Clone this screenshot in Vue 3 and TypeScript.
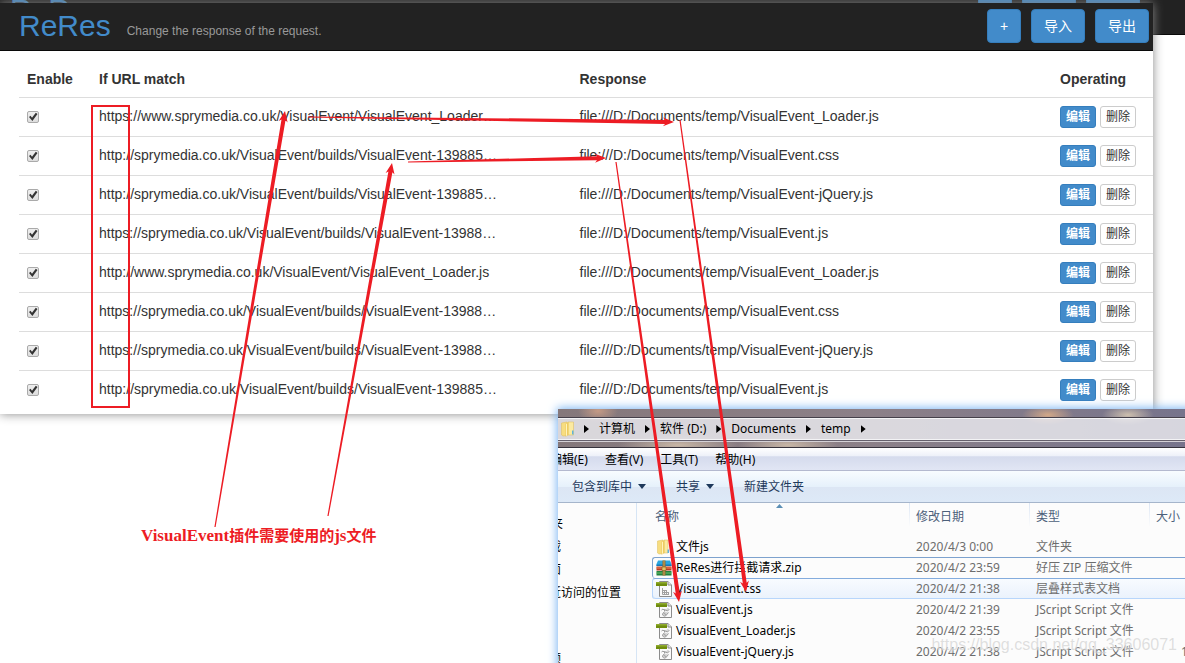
<script setup lang="ts">
interface Rule {
  url: string
  response: string
  enabled: boolean
}

interface FileRow {
  icon: 'folder' | 'zip' | 'css' | 'js'
  name: string
  date: string
  type: string
  size: string
  state: '' | 'focused' | 'hovered'
}

const base = 'file:///D:/Documents/temp/'

const rules: Rule[] = [
  { url: 'https://www.sprymedia.co.uk/VisualEvent/VisualEvent_Loader…', response: base + 'VisualEvent_Loader.js', enabled: true },
  { url: 'http://sprymedia.co.uk/VisualEvent/builds/VisualEvent-139885…', response: base + 'VisualEvent.css', enabled: true },
  { url: 'http://sprymedia.co.uk/VisualEvent/builds/VisualEvent-139885…', response: base + 'VisualEvent-jQuery.js', enabled: true },
  { url: 'https://sprymedia.co.uk/VisualEvent/builds/VisualEvent-13988…', response: base + 'VisualEvent.js', enabled: true },
  { url: 'http://www.sprymedia.co.uk/VisualEvent/VisualEvent_Loader.js', response: base + 'VisualEvent_Loader.js', enabled: true },
  { url: 'https://sprymedia.co.uk/VisualEvent/builds/VisualEvent-13988…', response: base + 'VisualEvent.css', enabled: true },
  { url: 'https://sprymedia.co.uk/VisualEvent/builds/VisualEvent-13988…', response: base + 'VisualEvent-jQuery.js', enabled: true },
  { url: 'http://sprymedia.co.uk/VisualEvent/builds/VisualEvent-139885…', response: base + 'VisualEvent.js', enabled: true },
]

const crumbs: string[] = ['计算机', '软件 (D:)', 'Documents', 'temp']
const menus: string[] = ['编辑(E)', '查看(V)', '工具(T)', '帮助(H)']
const places: string[] = ['下载', '桌面', '最近访问的位置']

const files: FileRow[] = [
  { icon: 'folder', name: '文件js', date: '2020/4/3 0:00', type: '文件夹', size: '', state: '' },
  { icon: 'zip', name: 'ReRes进行拦截请求.zip', date: '2020/4/2 23:59', type: '好压 ZIP 压缩文件', size: '', state: 'focused' },
  { icon: 'css', name: 'VisualEvent.css', date: '2020/4/2 21:38', type: '层叠样式表文档', size: '', state: 'hovered' },
  { icon: 'js', name: 'VisualEvent.js', date: '2020/4/2 21:39', type: 'JScript Script 文件', size: '', state: '' },
  { icon: 'js', name: 'VisualEvent_Loader.js', date: '2020/4/2 23:55', type: 'JScript Script 文件', size: '', state: '' },
  { icon: 'js', name: 'VisualEvent-jQuery.js', date: '2020/4/2 21:38', type: 'JScript Script 文件', size: '1', state: '' },
]

/* Outline of an arrow that widens from its tail towards its head. */
function arrow(x1: number, y1: number, x2: number, y2: number, neck: number): string {
  const length = Math.hypot(x2 - x1, y2 - y1)
  const ux = (x2 - x1) / length
  const uy = (y2 - y1) / length
  const at = (along: number, side: number): string =>
    `${(x1 + ux * along - uy * side).toFixed(1)},${(y1 + uy * along + ux * side).toFixed(1)}`
  return [
    at(0, -0.6),
    at(length - 9, -neck / 2),
    at(length - 11, -4.5),
    at(length, 0),
    at(length - 11, 4.5),
    at(length - 9, neck / 2),
    at(0, 0.6),
  ].join(' ')
}

const arrows: string[] = [
  arrow(215, 527, 285, 111, 4),
  arrow(328, 516, 392, 163, 4),
  arrow(308, 117, 674, 122, 4),
  arrow(408, 162, 606, 158, 4),
  arrow(680, 120, 746, 592, 4),
  arrow(616, 162, 679, 602, 4),
]
</script>

<template>
  <div class="stage">
    <div class="backdrop" aria-hidden="true">
      <div class="bar bar-behind">
        <span class="brand">ReRes</span>
        <span class="bar-actions">
          <span class="btn btn-plus"></span>
          <span class="btn"></span>
          <span class="btn"></span>
        </span>
      </div>
    </div>

    <main class="panel">
      <header class="bar">
        <a class="brand" href="#">ReRes</a>
        <span class="tagline">Change the response of the request.</span>
        <div class="bar-actions">
          <button type="button" class="btn btn-plus">+</button>
          <button type="button" class="btn">导入</button>
          <button type="button" class="btn">导出</button>
        </div>
      </header>
      <table class="rules">
        <colgroup>
          <col class="col-enable" />
          <col />
          <col />
          <col class="col-ops" />
        </colgroup>
        <thead>
          <tr>
            <th>Enable</th>
            <th>If URL match</th>
            <th>Response</th>
            <th>Operating</th>
          </tr>
        </thead>
        <tbody>
          <tr v-for="(rule, i) in rules" :key="i">
            <td><input v-model="rule.enabled" class="tick" type="checkbox" :aria-label="'Enable ' + rule.url" /></td>
            <td>{{ rule.url }}</td>
            <td>{{ rule.response }}</td>
            <td>
              <div class="ops">
                <button type="button" class="btn-sm btn-edit">编辑</button>
                <button type="button" class="btn-sm">删除</button>
              </div>
            </td>
          </tr>
        </tbody>
      </table>
    </main>

    <section class="explorer">
      <div class="glass">
        <nav class="address">
          <svg class="icon" viewBox="0 0 16 16" aria-hidden="true">
            <path d="M1.500 2L7 1v13.500L3 15l-1.500-1z" fill="#f7dd80" stroke="#dfbc58" stroke-width=".5" />
            <path d="M8 1h5.500v13H8z" fill="#fbeaa0" stroke="#dcb957" stroke-width=".5" />
            <path d="M5.500 2.500L8.500 1v13l-3 1.700z" fill="#edcb62" />
            <path d="M6 3l1-.5v12l-1 .5z" fill="#fff3bd" />
            <path d="M12 9.500h1.500v4H12z" fill="#5fb3dd" />
          </svg>
          <template v-for="crumb in crumbs" :key="crumb">
            <i class="chevron"></i>
            <a class="crumb" href="#">{{ crumb }}</a>
          </template>
          <i class="chevron"></i>
        </nav>
      </div>
      <div class="menubar">
        <button v-for="menu in menus" :key="menu" type="button" class="plain">{{ menu }}</button>
      </div>
      <div class="toolbar">
        <button type="button" class="plain">包含到库中<i class="caret"></i></button>
        <button type="button" class="plain">共享<i class="caret"></i></button>
        <button type="button" class="plain">新建文件夹</button>
      </div>
      <div class="content">
        <aside class="tree">
          <div class="tree-head">收藏夹</div>
          <div v-for="place in places" :key="place" class="tree-item">{{ place }}</div>
          <div class="tree-item tree-library">视频</div>
        </aside>
        <div class="listing">
          <i class="sort"></i>
          <table class="files">
            <colgroup>
              <col />
              <col class="col-date" />
              <col class="col-date" />
              <col class="col-size" />
            </colgroup>
            <thead>
              <tr>
                <th>名称</th>
                <th>修改日期</th>
                <th>类型</th>
                <th>大小</th>
              </tr>
            </thead>
            <tbody>
              <tr v-for="file in files" :key="file.name" :class="file.state">
                <td>
                  <div class="file">
                    <svg v-if="file.icon === 'folder'" class="icon" viewBox="0 0 16 16" aria-hidden="true">
                      <path d="M1.500 2L7 1v13.500L3 15l-1.500-1z" fill="#f7dd80" stroke="#dfbc58" stroke-width=".5" />
                      <path d="M8 1h4v13H8z" fill="#fbeaa0" stroke="#dcb957" stroke-width=".5" />
                      <path d="M5.500 2.500L8.500 1v13l-3 1.700z" fill="#edcb62" />
                      <path d="M6 3l1-.5v12l-1 .5z" fill="#fff3bd" />
                      <path d="M11.500 10.500H13v3.500h-1.500z" fill="#5fb3dd" />
                    </svg>
                    <svg v-else-if="file.icon === 'zip'" class="icon" viewBox="0 0 16 16" aria-hidden="true">
                      <path d="M2 .5h12L15.500 4v2H.5V4z" fill="#2aa6e0" />
                      <path d="M.5 4.500h15V6H.5z" fill="#1678b4" />
                      <path d="M.5 6.500h15v4H.5z" fill="#b93a22" />
                      <path d="M.5 7.500h15v1H.5z" fill="#f08a5c" />
                      <path d="M.5 11h15v4.500H.5z" fill="#23803f" />
                      <path d="M.5 12.500h15v1H.5z" fill="#69c56b" />
                      <path d="M6.500.5h3v15h-3z" fill="#8f6b33" />
                      <path d="M7.500.5h1v15h-1z" fill="#c9a557" />
                      <path d="M6 7h4v3.500H6z" fill="#e5c365" stroke="#7b5a25" stroke-width=".6" />
                    </svg>
                    <svg v-else class="icon" viewBox="0 0 16 16" aria-hidden="true">
                      <path d="M3.500.5h8.500l3.500 3.500v11.500h-12z" fill="#fafafa" stroke="#8c8c8c" />
                      <path d="M12 .5V4h3.500" fill="#e4e4e4" stroke="#8c8c8c" />
                      <path d="M0 1h11v4H0z" fill="#6f8c0c" />
                      <path d="M0 1h11v1.500H0z" fill="#8faa2c" />
                      <path v-if="file.icon === 'css'" d="M6.500 7v6.500H13M6.500 9.500h4M6.500 11.500H13M8.500 9v4.500M10.500 9v4.500M12.500 11v2.500" fill="none" stroke="#a0a0a0" />
                      <g v-else>
                        <path d="M8 7.500l3.500 1.500 1.500-1.500-1-1M8.500 9.500l-2 2.500c0 1.500 1.500 2.500 3 2l3-3.500" fill="#d6d6d6" stroke="#9a9a9a" />
                        <path d="M5.500 8l1.500-1 2 2M8 11.500l2 1" fill="none" stroke="#9a9a9a" />
                      </g>
                    </svg>
                    <span>{{ file.name }}</span>
                  </div>
                </td>
                <td>{{ file.date }}</td>
                <td>{{ file.type }}</td>
                <td class="size">{{ file.size }}</td>
              </tr>
            </tbody>
          </table>
        </div>
      </div>
    </section>

    <p class="watermark">https://blog.csdn.net/qq_33606071</p>

    <svg class="marks" width="1185" height="663" viewBox="0 0 1185 663" aria-hidden="true">
      <rect x="92" y="106" width="37" height="301" fill="none" stroke="#ed1c24" stroke-width="2" />
      <polygon v-for="points in arrows" :key="points" :points="points" fill="#ed1c24" />
    </svg>
    <p class="note"><span>VisualEvent</span>插件需要使用的<span>js</span>文件</p>
  </div>
</template>

<style>
body {
  margin: 0;
  background: #fff;
}
</style>

<style scoped>
.stage {
  position: relative;
  min-height: 100vh;
  overflow: hidden;
  font-family: "Liberation Sans", "Noto Sans CJK SC", sans-serif;
  font-size: 14px;
  line-height: 20px;
  color: #333;
}
.stage *,
.stage *::before {
  box-sizing: border-box;
}
button {
  font-family: inherit;
  cursor: pointer;
}
a {
  text-decoration: none;
}

.backdrop {
  position: absolute;
  inset: 0 0 auto 0;
  height: 35px;
  overflow: hidden;
  background: #222;
  border-bottom: 1px solid #090909;
}
.bar-behind {
  width: calc(100% - 32px);
  margin: -13px 0 0 -9px;
}

.panel {
  position: relative;
  margin: 3px 32px 0 0;
  padding-bottom: 5px;
  background: #fff;
  box-shadow: 0 0 10px #888;
}
.bar {
  display: flex;
  align-items: flex-start;
  height: 48px;
  padding: 0 4px 0 19px;
  background: #222;
  border-bottom: 1px solid #090909;
}
.brand {
  font-size: 30px;
  line-height: 46px;
  color: #428bca;
}
.tagline {
  margin: 18px 0 0 16px;
  font-size: 12px;
  color: #999;
}
.bar-actions {
  display: flex;
  gap: 10px;
  margin: 6px 0 0 auto;
}
.btn {
  width: 54px;
  height: 34px;
  padding: 0;
  font-size: 14px;
  line-height: 20px;
  color: #fff;
  background: #428bca;
  border: 1px solid #357ebd;
  border-radius: 4px;
}
.btn-plus {
  width: 34px;
}

.rules {
  width: calc(100% - 19px);
  margin-left: 19px;
  table-layout: fixed;
  border-collapse: separate;
  border-spacing: 0;
}
.col-enable {
  width: 72px;
}
.col-ops {
  width: 101px;
}
.rules th {
  height: 46px;
  padding: 10px 8px 0;
  text-align: left;
  font-weight: bold;
}
.rules td {
  height: 39px;
  padding: 8px 8px 0;
  border-top: 1px solid #ddd;
  vertical-align: top;
  white-space: nowrap;
}
.tick {
  display: block;
  width: 12px;
  height: 12px;
  margin: 5px 0 0;
  appearance: none;
  background: linear-gradient(#eee, #ddd);
  border: 1px solid #aaa;
  border-radius: 2px;
}
.tick:checked::before {
  content: "";
  display: block;
  width: 10px;
  height: 10px;
  background: #333;
  clip-path: polygon(10% 50%, 25% 38%, 40% 58%, 78% 8%, 95% 20%, 44% 90%);
}
.ops {
  display: flex;
  gap: 4px;
}
.btn-sm {
  width: 36px;
  height: 22px;
  padding: 0;
  font-size: 12px;
  line-height: 18px;
  color: #333;
  background: #fff;
  border: 1px solid #ccc;
  border-radius: 3px;
}
.btn-edit {
  font-weight: bold;
  color: #fff;
  background: #428bca;
  border-color: #357ebd;
}

.explorer {
  position: absolute;
  inset: 409px 0 0 558px;
  display: flex;
  flex-direction: column;
  overflow: hidden;
  font-family: "Noto Sans", "Noto Sans CJK SC", sans-serif;
  font-size: 12px;
  line-height: 18px;
  color: #000;
  background: #fcfcfc;
}
.stage::after {
  content: "";
  position: absolute;
  inset: 409px -10px -10px 558px;
  box-shadow: 0 0 9px 1px #79b4f2;
  pointer-events: none;
}
.glass {
  height: 39px;
  padding-top: 8px;
  background:
    radial-gradient(ellipse 20px 12px at 40px 2px, #c49a85, transparent),
    radial-gradient(ellipse 26px 10px at 490px 6px, #d2a888, transparent),
    radial-gradient(ellipse 26px 10px at 570px 6px, #cdbfae, transparent),
    radial-gradient(ellipse 60px 10px at 120px 36px, #c9b7a6, transparent),
    radial-gradient(ellipse 50px 10px at 230px 36px, #c9b7a6, transparent),
    linear-gradient(90deg, #85787b, #8c8088 50%, #77748c);
  border-bottom: 1px solid #36323c;
}
.address {
  display: flex;
  align-items: center;
  gap: 10px;
  height: 24px;
  padding-left: 2px;
  background: rgba(235, 235, 240, .82);
  border-top: 1px solid #45404a;
  border-bottom: 1px solid #66606c;
  box-shadow: inset 0 1px #f3f3f5, inset 0 -1px #f3f3f5, 0 1px #d5d1d6;
}
.icon {
  flex: none;
  width: 16px;
  height: 16px;
}
.address .icon {
  margin-right: -2px;
}
.chevron {
  width: 5px;
  height: 8px;
  background: #000;
  clip-path: polygon(0 0, 100% 50%, 0 100%);
}
.crumb {
  color: #000;
}
.menubar {
  display: flex;
  gap: 17px;
  height: 23px;
  padding-top: 2px;
  margin-left: -8px;
  background: linear-gradient(#fff, #eef1f9 35%, #d5dbed 40%, #e1e6f4);
  border-bottom: 1px solid #b4b9cf;
}
.plain {
  display: flex;
  align-items: center;
  padding: 0;
  font-size: 12px;
  line-height: 18px;
  color: #000;
  background: none;
  border: 0;
}
.toolbar {
  display: flex;
  gap: 30px;
  height: 32px;
  padding-left: 14px;
  background: linear-gradient(#f8fcff, #e6f1fb 50%, #dce6f4 52%, #dde9f7);
  border-bottom: 1px solid #a5b5cb;
}
.toolbar .plain {
  color: #1e395b;
}
.caret {
  width: 8px;
  height: 5px;
  margin-left: 6px;
  background: #1e395b;
  clip-path: polygon(0 0, 100% 0, 50% 100%);
}
.content {
  display: flex;
  flex: 1;
  min-height: 0;
}
.tree {
  flex: none;
  width: 79px;
  padding-top: 9px;
  border-right: 1px solid #d6e5f5;
  white-space: nowrap;
}
.tree-head {
  height: 23px;
  margin-left: -31px;
  line-height: 23px;
}
.tree-item {
  height: 23px;
  margin-left: -21px;
  line-height: 23px;
}
.tree-library {
  margin-top: 43px;
}
.listing {
  position: relative;
  flex: 1;
  min-width: 0;
  padding-left: 15px;
}
.sort {
  position: absolute;
  top: 1px;
  left: 139px;
  width: 7px;
  height: 4px;
  background: #5b8fb5;
  clip-path: polygon(50% 0, 100% 100%, 0 100%);
}
.files {
  width: 100%;
  table-layout: fixed;
  border-collapse: separate;
  border-spacing: 0;
}
.col-date {
  width: 120px;
}
.col-size {
  width: 36px;
}
.files th {
  height: 33px;
  padding: 0 0 6px 7px;
  text-align: left;
  font-weight: normal;
  white-space: nowrap;
  color: #4c607a;
  background: linear-gradient(#dce6f4, #fcfcfc) left top / 1px 24px no-repeat;
}
.files th:first-child {
  padding-left: 3px;
  background: none;
}
.files td {
  height: 21px;
  padding: 0 0 0 7px;
  border-top: 1px solid transparent;
  white-space: nowrap;
  color: #6d6d6d;
}
.files td:first-child {
  padding-left: 4px;
  color: #000;
}
.files td.size {
  padding-left: 32px;
}
.file {
  display: flex;
  align-items: center;
  gap: 4px;
}
.focused td {
  border-top-color: #7da2ce;
}
.focused td:first-child {
  border-left: 1px solid #7da2ce;
  border-radius: 3px 0 0 3px;
  padding-left: 3px;
}
.hovered td {
  background: linear-gradient(#f8fbff, #eaf2fc);
  border-top-color: #84acdd;
  box-shadow: inset 0 -1px #b8d6fb;
}
.hovered td:first-child {
  border-left: 1px solid #b8d6fb;
  border-radius: 3px 0 0 3px;
  padding-left: 3px;
}

.watermark {
  position: absolute;
  right: 8px;
  bottom: 8px;
  margin: 0;
  font-size: 16px;
  color: rgba(190, 190, 190, .5);
  text-shadow: 0 0 2px #fff;
}
.marks {
  position: absolute;
  top: 0;
  left: 0;
  z-index: 2;
  pointer-events: none;
}
.note {
  position: absolute;
  top: 526px;
  left: 141px;
  margin: 0;
  font-family: "Liberation Serif", "Noto Sans CJK SC", serif;
  font-size: 15px;
  font-weight: bold;
  color: #ed1c24;
  white-space: nowrap;
}
.note span {
  font-size: 17px;
}
</style>
